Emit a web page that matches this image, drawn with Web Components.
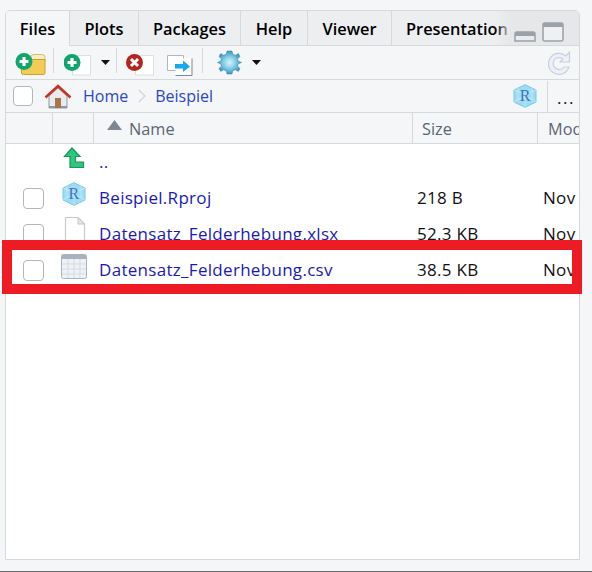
<!DOCTYPE html>
<html lang="de">
<head>
<meta charset="utf-8">
<title>Files</title>
<style>
  html, body { margin: 0; height: 100%; }
  body { background: #f4f6f8; font-family: "Open Sans", "Noto Sans", sans-serif; overflow: hidden; }
</style>
</head>
<body>
<files-page>
  <files-pane>
    <pane-tabs></pane-tabs>
    <pane-toolbar></pane-toolbar>
    <path-bar></path-bar>
    <file-header></file-header>
    <file-row icon="up" name=".." no-check></file-row>
    <file-row icon="rproj" name="Beispiel.Rproj" size="218 B" modified="Nov"></file-row>
    <file-row icon="doc" name="Datensatz_Felderhebung.xlsx" size="52.3 KB" modified="Nov"></file-row>
    <file-row icon="csv" name="Datensatz_Felderhebung.csv" size="38.5 KB" modified="Nov"></file-row>
  </files-pane>
  <red-frame></red-frame>
</files-page>

<script>
const ICONS = {
  up: `<svg style="margin-left:-3px" width="24" height="22" viewBox="0 0 24 22"><path d="M11 1 L19 9.500 H14.500 V15 H22.500 V20.500 H9 V9.500 H3.500 Z" fill="#2fc77f" stroke="#17975a" stroke-width="1.200"/></svg>`,
  rproj: `<svg style="margin-left:-1px" width="24" height="24" viewBox="0 0 24 24"><path d="M12 .7 L23 6 V18 L12 23.300 L1 18 V6 Z" fill="#9edbf4" stroke="#74c7e8"/><path d="M1 6 L12 10.500 L23 6 M12 10.500 V23 M5 3.800 V15.500 L1 18 M5 15.500 L12 12.500 L19 15.500 L23 18 M19 3.800 V15.500" fill="none" stroke="#c9ecf9" stroke-width=".8"/><text x="12" y="17" text-anchor="middle" font-family="Liberation Serif, serif" font-size="16" fill="#3d76b8">R</text></svg>`,
  doc: `<svg width="22" height="26" viewBox="0 0 22 26"><path d="M1.500 .5 H14 L20.500 7 V26 H1.500 Z" fill="#fff" stroke="#c6c9cd" stroke-width="1.200"/><path d="M14 .5 V7 H20.500 Z" fill="#e4e6e9" stroke="#c4c7cb"/></svg>`,
  csv: `<svg style="margin-left:-1px" width="26" height="25" viewBox="0 0 26 25"><rect x=".5" y=".5" width="25" height="24" rx="2" fill="#eef1f6" stroke="#aab2bd"/><path d="M.5 5 V2.500 Q.5 .5 2.500 .5 H23.500 Q25.500 .5 25.500 2.500 V5 Z" fill="#a9b2be"/><path d="M1 10 H25 M1 15 H25 M1 20 H25 M7 5 V24 M13 5 V24 M19 5 V24" stroke="#d5dbe5"/></svg>`,
  home: `<path d="M5 12 L14 4 L23 12 V24 H5 Z" fill="#e8eaec" stroke="#8d99a6"/><rect x="5" y="22" width="18" height="2" fill="#8d99a6"/><rect x="11" y="14" width="6" height="10" fill="#a9744a"/><path d="M1.500 13.500 L14 2 L26.500 13.500" fill="none" stroke="#c8321e" stroke-width="2.400"/>`
};

const plus = (cx, cy) => `<circle cx="${cx}" cy="${cy}" r="8.500" fill="#0fa56c"/><path d="M${cx - 4.500} ${cy} H${cx + 4.500} M${cx} ${cy - 4.500} V${cy + 4.500}" stroke="#fff" stroke-width="3.200"/>`;

class FilesPage extends HTMLElement {
  connectedCallback() {
    this.attachShadow({ mode: 'open' }).innerHTML = `
      <style>
        :host { display: block; position: relative; box-sizing: border-box; width: 592px; height: 572px; padding: 10px 12px 11px 5px; border-bottom: 1px solid #6b6b6b; }
      </style>
      <slot></slot>`;
  }
}

class FilesPane extends HTMLElement {
  connectedCallback() {
    this.attachShadow({ mode: 'open' }).innerHTML = `
      <style>
        :host { display: flex; flex-direction: column; box-sizing: border-box; height: 550px; background: #fff; border: 1px solid #d6d9dc; border-top-left-radius: 5px; border-top-right-radius: 5px; overflow: hidden; }
      </style>
      <slot></slot>`;
  }
}

class PaneTabs extends HTMLElement {
  connectedCallback() {
    const tabs = [['Files', 64], ['Plots', 69], ['Packages', 102], ['Help', 67], ['Viewer', 84]];
    this.attachShadow({ mode: 'open' }).innerHTML = `
      <style>
        :host { display: flex; height: 35px; flex: none; box-sizing: border-box; background: #eceef0; border-bottom: 1px solid #d6d9dc; font: 600 16.4px "Open Sans", sans-serif; color: #000; position: relative; }
        .tab { box-sizing: border-box; flex: none; border-right: 1px solid #d6d9dc; display: flex; align-items: center; justify-content: center; }
        .active { background: #f4f6f8; height: 35px; }
        .last { flex: 1; padding: 0 0 0 14px; display: flex; align-items: center; overflow: hidden; white-space: nowrap; min-width: 0; }
        .ctl { flex: none; width: 84px; display: flex; gap: 6px; align-items: flex-start; background: linear-gradient(90deg, rgba(229,231,233,0), #e5e7e9 17px); margin-left: -32px; position: relative; justify-content: flex-end; box-sizing: border-box; padding-right: 15px; }
        svg { display: block; }
        .min { margin-top: 20px; }
        .max { margin-top: 11px; }
      </style>
      ${tabs.map(([t, w], i) => `<div class="tab ${i ? '' : 'active'}" style="width:${w}px">${t}</div>`).join('')}
      <div class="last">Presentation</div>
      <div class="ctl">
        <svg class="min" width="22" height="11" viewBox="0 0 22 11"><path d="M1 10 V3 Q1 1 3 1 H19 Q21 1 21 3 V10 Z" fill="#e9ebed" stroke="#9aa1a9" stroke-width="1.500"/><path d="M1 5 V3 Q1 1 3 1 H19 Q21 1 21 3 V5 Z" fill="#9aa1a9"/></svg>
        <svg class="max" width="22" height="20" viewBox="0 0 22 20"><rect x="1" y="1" width="20" height="18" rx="2" fill="#eef0f2" stroke="#9aa1a9" stroke-width="1.500"/><path d="M1 5 V3 Q1 1 3 1 H19 Q21 1 21 3 V5 Z" fill="#9aa1a9"/></svg>
      </div>`;
  }
}

class PaneToolbar extends HTMLElement {
  connectedCallback() {
    const caret = (ml) => `<svg style="margin-left:${ml}px" width="9" height="5" viewBox="0 0 9 5"><path d="M0 0 H9 L4.500 5 Z" fill="#111"/></svg>`;
    const sep = (ml) => `<i style="margin-left:${ml}px"></i>`;
    const page = (x, y) => `<path d="M${x} ${y} H${x + 18} V${y + 19.500} H${x} Z" fill="#fff" stroke="#dcdfe3"/>`;
    this.attachShadow({ mode: 'open' }).innerHTML = `
      <style>
        :host { display: flex; align-items: center; height: 34px; flex: none; box-sizing: border-box; background: #f4f6f8; border-bottom: 1px solid #d6d9dc; padding-left: 9px; }
        i { display: block; width: 1px; height: 25px; background: #d6d9dc; margin-top: -4px; }
        svg { display: block; flex: none; }
        .end { margin-left: auto; margin-right: 8px; }
      </style>
      <svg width="31" height="26" viewBox="0 0 31 26">
        <path d="M16 7 Q16 4.500 19 4.500 H27 Q30 4.500 30 7 V12 H16 Z" fill="#f6edc9" stroke="#d9bd6a"/>
        <path d="M6.500 9.500 H30 V23 Q30 24.500 28 24.500 H8.500 Q6.500 24.500 6.500 23 Z" fill="#f3cc55" stroke="#c9a02e"/>
        ${plus(9, 11.500)}
      </svg>
      ${sep(7)}
      <svg style="margin-left:10px" width="28" height="26" viewBox="0 0 28 26">${page(8.500, 5.500)}${plus(8, 12.500)}</svg>
      ${caret(9)}
      ${sep(6)}
      <svg style="margin-left:9px" width="28" height="26" viewBox="0 0 28 26">${page(9.500, 5.500)}
        <circle cx="8.500" cy="12.500" r="8.500" fill="#b3261e"/><path d="M5 9 L12 16 M12 9 L5 16" stroke="#fff" stroke-width="3"/>
      </svg>
      <svg style="margin-left:13px" width="26" height="26" viewBox="0 0 26 26">
        <path d="M.5 5.500 H16.500 V20.500 H.5 Z" fill="#fff" stroke="#aeb6bf"/>
        <path d="M8.500 8.500 H25 V25.500 H8.500 Z" fill="#fff"/>
        <path d="M25 8.500 V25.500 H8.500" fill="none" stroke="#7d8794"/>
        <path d="M8 14 H16 V10.500 L23 16.500 L16 22 V18.500 H8 Z" fill="#19a7ee"/>
      </svg>
      ${sep(9)}
      <svg style="margin-left:14px" width="25" height="25" viewBox="0 0 25 25">
        <defs><radialGradient id="g"><stop offset="0" stop-color="#d8f3fa"/><stop offset=".45" stop-color="#8fd3ea"/><stop offset="1" stop-color="#3c94bb"/></radialGradient></defs>
        <path d="M10 1 H15 L15.700 4.200 L18.500 5.300 L21.300 3.600 L23 6.500 L20.600 8.800 L21 11 L24.500 12.500 L21 14 L20.600 16.200 L23 18.500 L21.300 21.400 L18.500 19.700 L15.700 20.800 L15 24 H10 L9.300 20.800 L6.500 19.700 L3.700 21.400 L2 18.500 L4.400 16.200 L4 14 L.5 12.500 L4 11 L4.400 8.800 L2 6.500 L3.700 3.600 L6.500 5.300 L9.300 4.200 Z" fill="url(#g)" stroke="#3c8db3" stroke-width=".6" stroke-linejoin="round"/>
      </svg>
      ${caret(10)}
      <svg class="end" width="23" height="24" viewBox="0 0 23 24">
        <path d="M21.500 1 V11 H12 L15 8 A6 6 0 1 0 16 16 H21 A10.500 10.500 0 1 1 18 5 Z" fill="#eef0f7" stroke="#c9cfdc" stroke-width="1.200"/>
      </svg>`;
  }
}

class PathBar extends HTMLElement {
  connectedCallback() {
    this.attachShadow({ mode: 'open' }).innerHTML = `
      <style>
        :host { display: flex; align-items: center; height: 33px; flex: none; box-sizing: border-box; background: #f4f6f8; border-bottom: 1px solid #d6d9dc; padding-left: 7px; font: 16px "Open Sans", sans-serif; color: #2b47c9; }
        .check { width: 18px; height: 18px; border: 1px solid #b4b7ba; border-radius: 4px; background: #fff; flex: none; }
        svg { display: block; flex: none; }
        .chev { margin: 0 9px 0 10px; }
        .tail { margin-left: auto; display: flex; align-items: center; height: 100%; }
        .tail i { display: block; width: 1px; height: 31px; background: #d6d9dc; margin: 0 9px 0 10px; }
        .more { color: #111; width: 22px; font-size: 17px; letter-spacing: 1.5px; line-height: 1; padding-top: 3px; }
      </style>
      <div class="check"></div>
      <svg style="margin-left:11px" width="28" height="25" viewBox="0 0 28 25">${ICONS.home}</svg>
      <span style="margin-left:11px">Home</span>
      <svg class="chev" width="8" height="14" viewBox="0 0 8 14"><path d="M1 1 L7 7 L1 13" fill="none" stroke="#d0d3d7" stroke-width="1.200"/></svg>
      <span>Beispiel</span>
      <div class="tail">
        ${ICONS.rproj}
        <i></i>
        <span class="more">...</span>
      </div>`;
  }
}

const COLS = 'grid-template-columns: 47px 41px 319px 125px 42px;';

class FileHeader extends HTMLElement {
  connectedCallback() {
    this.attachShadow({ mode: 'open' }).innerHTML = `
      <style>
        :host { display: grid; ${COLS} height: 31px; flex: none; box-sizing: border-box; background: #f4f6f8; border-bottom: 1px solid #d6d9dc; font: 16.300px "Open Sans", sans-serif; color: #5a6673; overflow: hidden; }
        div { border-right: 1px solid #d6d9dc; display: flex; align-items: center; box-sizing: border-box; white-space: nowrap; overflow: hidden; padding-top: 1px; }
        .name { padding-left: 13px; gap: 7px; }
        .size { padding-left: 9px; }
        .mod { border: 0; padding-left: 10px; }
        svg { display: block; margin-top: -7px; }
      </style>
      <div></div><div></div>
      <div class="name"><svg width="15" height="10" viewBox="0 0 15 10"><path d="M7.500 0 L15 10 H0 Z" fill="#7f8794"/></svg>Name</div>
      <div class="size">Size</div>
      <div class="mod">Modified</div>`;
  }
}

class FileRow extends HTMLElement {
  connectedCallback() {
    const a = (n) => this.getAttribute(n) || '';
    this.attachShadow({ mode: 'open' }).innerHTML = `
      <style>
        :host { display: grid; ${COLS} height: 36px; flex: none; align-items: center; font: 17px "Open Sans", sans-serif; letter-spacing: .3px; color: #111; overflow: hidden; }
        .box { display: flex; justify-content: flex-end; padding-right: 9px; }
        .check { width: 19px; height: 19px; border: 1px solid #b4b7ba; border-radius: 4px; background: #fff; }
        .ic { display: flex; justify-content: center; margin-top: -8px; height: 30px; align-items: center; padding-left: 2px; }
        .ic svg { display: block; }
        .txt { margin-top: -2px; }
        a { color: #1a1ab8; text-decoration: none; white-space: nowrap; margin-left: 5px; }
        .size { margin-left: 4px; white-space: nowrap; }
        .mod { margin-left: 5px; white-space: nowrap; }
      </style>
      <div class="box">${this.hasAttribute('no-check') ? '' : '<div class="check"></div>'}</div>
      <div class="ic">${ICONS[a('icon')]}</div>
      <div class="txt"><a href="#">${a('name')}</a></div>
      <div class="size txt">${a('size')}</div>
      <div class="mod txt">${a('modified')}</div>`;
  }
}

class RedFrame extends HTMLElement {
  connectedCallback() {
    this.attachShadow({ mode: 'open' }).innerHTML = `
      <style>
        :host { position: absolute; left: 2px; top: 240px; width: 560px; height: 34px; border: 10px solid #ed1c24; pointer-events: none; }
      </style>`;
  }
}

customElements.define('files-page', FilesPage);
customElements.define('files-pane', FilesPane);
customElements.define('pane-tabs', PaneTabs);
customElements.define('pane-toolbar', PaneToolbar);
customElements.define('path-bar', PathBar);
customElements.define('file-header', FileHeader);
customElements.define('file-row', FileRow);
customElements.define('red-frame', RedFrame);
</script>
</body>
</html>
